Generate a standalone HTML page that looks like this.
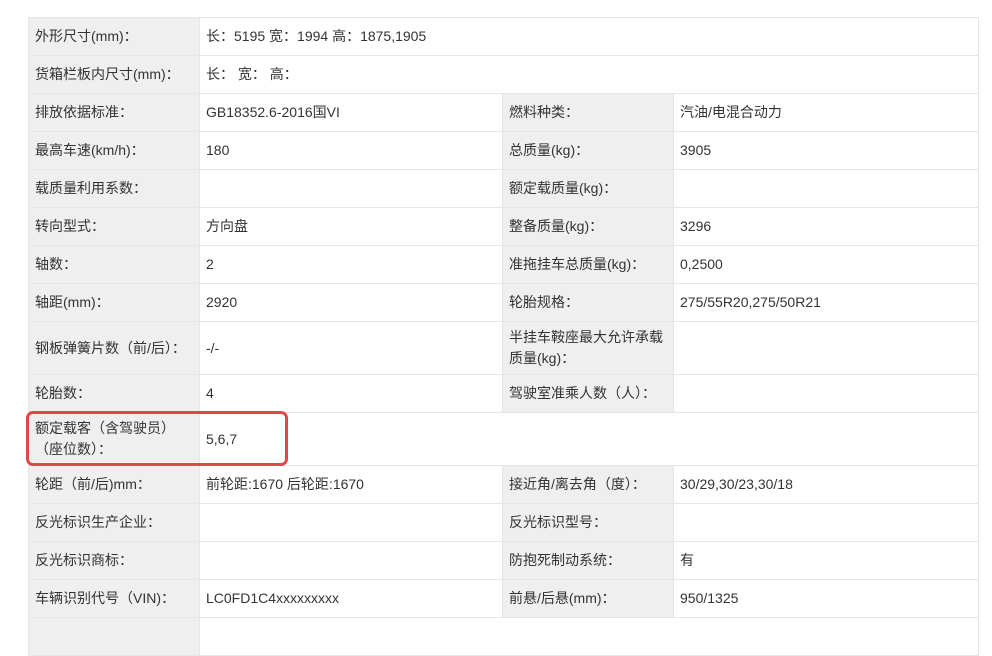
<!DOCTYPE html>
<html><head><meta charset="utf-8"><style>
body{margin:0;background:#fff;width:992px;height:627px;overflow:hidden;position:relative;font-family:"Liberation Sans","Noto Sans CJK SC",sans-serif;font-size:14px;color:#333}
table{position:absolute;left:28px;top:17px;width:950px;border-collapse:collapse;table-layout:fixed}
td{border:1px solid #e6e6e6;padding:0 6px;line-height:21px;vertical-align:middle}
td.l{background:#efefef}
.box{position:absolute;left:26px;top:411px;width:256px;height:49px;border:3px solid #e04848;border-radius:7px}
</style></head><body>
<table>
<colgroup><col style="width:171px"><col style="width:303px"><col style="width:171px"><col style="width:305px"></colgroup>
<tr style="height:38px"><td class="l">外形尺寸(mm)：</td><td colspan="3">长：5195 宽：1994 高：1875,1905</td></tr>
<tr style="height:38px"><td class="l">货箱栏板内尺寸(mm)：</td><td colspan="3">长：&nbsp;宽：&nbsp;高：</td></tr>
<tr style="height:38px"><td class="l">排放依据标准：</td><td>GB18352.6-2016国VI</td><td class="l">燃料种类：</td><td>汽油/电混合动力</td></tr>
<tr style="height:38px"><td class="l">最高车速(km/h)：</td><td>180</td><td class="l">总质量(kg)：</td><td>3905</td></tr>
<tr style="height:38px"><td class="l">载质量利用系数：</td><td></td><td class="l">额定载质量(kg)：</td><td></td></tr>
<tr style="height:38px"><td class="l">转向型式：</td><td>方向盘</td><td class="l">整备质量(kg)：</td><td>3296</td></tr>
<tr style="height:38px"><td class="l">轴数：</td><td>2</td><td class="l">准拖挂车总质量(kg)：</td><td>0,2500</td></tr>
<tr style="height:38px"><td class="l">轴距(mm)：</td><td>2920</td><td class="l">轮胎规格：</td><td>275/55R20,275/50R21</td></tr>
<tr style="height:53px"><td class="l">钢板弹簧片数（前/后）：</td><td>-/-</td><td class="l">半挂车鞍座最大允许承载质量(kg)：</td><td></td></tr>
<tr style="height:38px"><td class="l">轮胎数：</td><td>4</td><td class="l">驾驶室准乘人数（人）：</td><td></td></tr>
<tr style="height:53px"><td class="l">额定载客（含驾驶员）（座位数）：</td><td colspan="3">5,6,7</td></tr>
<tr style="height:38px"><td class="l">轮距（前/后)mm：</td><td>前轮距:1670 后轮距:1670</td><td class="l">接近角/离去角（度）：</td><td>30/29,30/23,30/18</td></tr>
<tr style="height:38px"><td class="l">反光标识生产企业：</td><td></td><td class="l">反光标识型号：</td><td></td></tr>
<tr style="height:38px"><td class="l">反光标识商标：</td><td></td><td class="l">防抱死制动系统：</td><td>有</td></tr>
<tr style="height:38px"><td class="l">车辆识别代号（VIN)：</td><td>LC0FD1C4xxxxxxxxx</td><td class="l">前悬/后悬(mm)：</td><td>950/1325</td></tr>
<tr style="height:38px"><td class="l"></td><td colspan="3"></td></tr>
</table>
<div class="box"></div>
</body></html>
